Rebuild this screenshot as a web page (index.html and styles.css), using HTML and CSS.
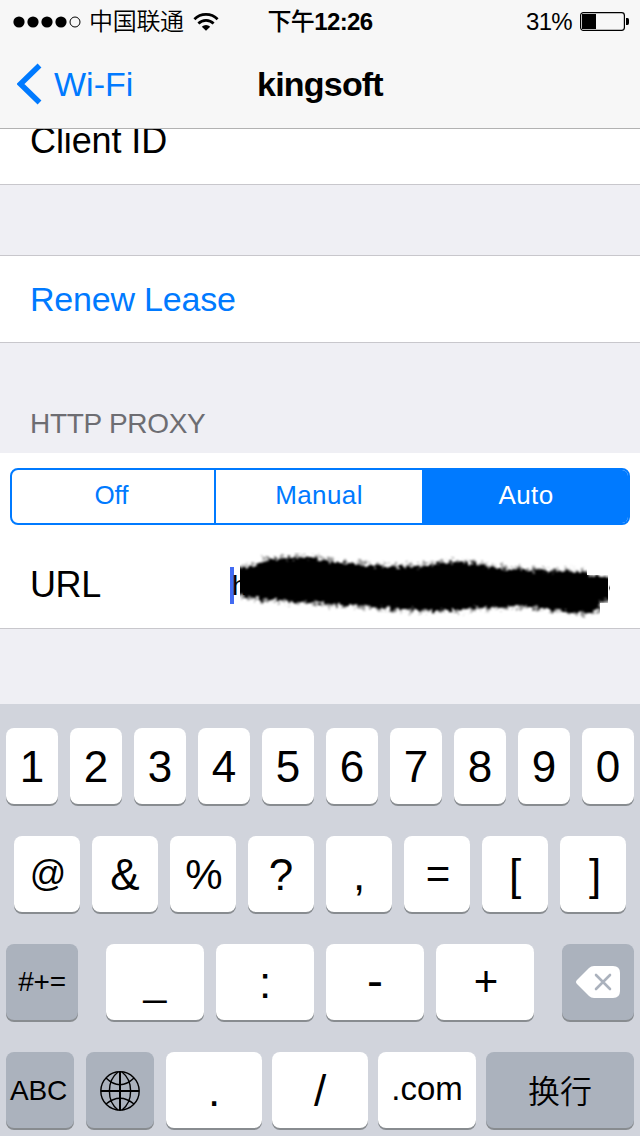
FILE: index.html
```html
<!DOCTYPE html>
<html lang="zh-CN">
<head>
<meta charset="utf-8">
<title>kingsoft</title>
<link rel="stylesheet" href="styles.css">
</head>
<body>
<div class="screen">
  <header class="header">
    <div class="status">
      <div class="status-left">
        <svg class="signal" width="68" height="12" viewBox="0 0 68 12"><circle cx="6" cy="6" r="5.6"/><circle cx="20" cy="6" r="5.6"/><circle cx="34" cy="6" r="5.6"/><circle cx="48" cy="6" r="5.6"/><circle cx="62" cy="6" r="5" fill="none" stroke="#000"/></svg>
        <span class="carrier">中国联通</span>
        <svg class="wifi" width="26" height="20" viewBox="0 0 26 20"><g fill="none" stroke="#000" stroke-width="2.7"><path d="M1.4 7.3a16.3 16.3 0 0 1 23.2 0"/><path d="M5.4 11.5a10.7 10.7 0 0 1 15.2 0"/></g><path d="M13 18.7l-4.2-4a6 6 0 0 1 8.4 0z"/></svg>
      </div>
      <div class="clock"><span class="cjk">下午</span>12:26</div>
      <div class="status-right">
        <span class="percent">31%</span>
        <svg class="battery" width="50" height="20" viewBox="0 0 50 20"><rect x=".6" y=".6" width="43.8" height="17.8" rx="2.8" fill="none" stroke="#000" stroke-width="1.2"/><rect x="2" y="2" width="14" height="15"/><path d="M46 6h1.500q1.500 0 1.500 2v3q0 2-1.500 2H46z"/></svg>
      </div>
    </div>
    <nav class="nav">
      <a class="back"><svg class="chevron" width="26" height="42" viewBox="0 0 26 42"><path d="M22.500 2.500 3.500 21l19 18.500" fill="none" stroke="#007aff" stroke-width="5.500"/></svg><span>Wi-Fi</span></a>
      <h1 class="title">kingsoft</h1>
    </nav>
  </header>

  <main class="settings">
    <div class="row client">Client ID</div>
    <div class="row renew">Renew Lease</div>
    <h2 class="section-title">HTTP PROXY</h2>
    <section class="proxy">
      <div class="segments">
        <span class="segment">Off</span><span class="segment">Manual</span><span class="segment on">Auto</span>
      </div>
      <div class="url-row">
        <span class="url-label">URL</span>
        <div class="field">
          <i class="caret"></i><span class="value">h</span>
          <svg class="scribble" width="372" height="68" viewBox="240 552 372 68">
            <defs>
              <filter id="rough" x="-5%" y="-20%" width="110%" height="140%"><feTurbulence type="fractalNoise" baseFrequency=".22" numOctaves="3" seed="4"/><feDisplacementMap in="SourceGraphic" scale="10" xChannelSelector="R" yChannelSelector="G"/><feGaussianBlur stdDeviation=".8"/></filter>
              <clipPath id="edge"><path d="M240 552h347v23h21v28h-8v17H240z"/></clipPath>
            </defs>
            <g clip-path="url(#edge)"><g filter="url(#rough)">
              <path id="mark" d="M232 568L255 566 262 562 275 559 290 558 310 557 325 560 340 563 360 564 380 566 400 567 425 566 440 563 460 562 475 564 490 567 510 569 540 571 589 572 591 577 614 577V600L599 601 601 608 590 613 570 612 550 609 520 606 490 607 460 610 430 610 400 609 370 607 340 605 310 602 280 600 258 599 240 595 232 594z"/>
              <use href="#mark" fill="none" stroke="#000" stroke-width="6" stroke-opacity=".4" stroke-dasharray="7 3 2 4"/>
            </g></g>
            <path d="M609 585q1.500 3 0 6z"/>
          </svg>
        </div>
      </div>
    </section>
  </main>

  <div class="keyboard">
    <div class="keys digits">
      <b class="key">1</b><b class="key">2</b><b class="key">3</b><b class="key">4</b><b class="key">5</b><b class="key">6</b><b class="key">7</b><b class="key">8</b><b class="key">9</b><b class="key">0</b>
    </div>
    <div class="keys symbols">
      <b class="key at">@</b><b class="key">&amp;</b><b class="key percent-key">%</b><b class="key">?</b><b class="key">,</b><b class="key math">=</b><b class="key">[</b><b class="key bracket">]</b>
    </div>
    <div class="keys third">
      <b class="key dark small">#+=</b><b class="key underscore">_</b><b class="key">:</b><b class="key hyphen">-</b><b class="key math">+</b>
      <b class="key dark"><svg width="44" height="32" viewBox="0 0 44 32"><path d="M18 0h19q7 0 7 7v18q0 7-7 7H18q-3 0-5-2L1 18q-2-2 0-4L13 2q2-2 5-2z" fill="#fff"/><path d="M20 9l14 14M34 9 20 23" stroke="#abb2bd" stroke-width="2.600" stroke-linecap="round"/></svg></b>
    </div>
    <div class="keys fourth">
      <b class="key dark small abc">ABC</b>
      <b class="key dark globe-key"><svg class="globe" width="40" height="40" viewBox="0 0 40 40" fill="none" stroke="#000" stroke-width="1.400"><circle cx="20" cy="20" r="19.200"/><path d="M20 1v38M1 20h38" stroke-width="2"/><path d="M18 1C6.500 10 6.500 30 18 39M22 1C33.500 10 33.500 30 22 39M6 7q14 13.500 28 0M6 33q14-11.500 28 0"/></svg></b>
      <b class="key">.</b><b class="key">/</b><b class="key com">.com</b><b class="key dark enter">换行</b>
    </div>
  </div>
</div>
</body>
</html>
```
FILE: styles.css
```css
* { box-sizing: border-box; }
body { margin: 0; font-family: "Liberation Sans", "Noto Sans CJK SC", sans-serif; color: #000; }
.screen { width: 640px; height: 1136px; overflow: hidden; display: flex; flex-direction: column; background: #efeff4; }

.header { height: 129px; background: #f7f7f7; border-bottom: 1px solid #b2b2b2; }
.status { height: 40px; display: grid; grid-template-columns: 1fr auto 1fr; align-items: center; font-size: 24px; line-height: 40px; }
.status-left { display: flex; align-items: center; padding-left: 13px; }
.signal { margin-top: 2px; }
.carrier { margin: -2px 0 0 8px; width: 96px; font-family: "Noto Sans CJK SC", sans-serif; font-weight: 350; font-size: 24px; letter-spacing: -.3px; white-space: nowrap; }
.wifi { margin: 1px 0 0 8px; }
.clock { font-weight: 700; letter-spacing: -.6px; white-space: nowrap; }
.cjk { font-family: "Noto Sans CJK SC", sans-serif; font-weight: 500; }
.status-right { display: flex; justify-content: flex-end; align-items: center; padding-right: 10px; }
.percent { letter-spacing: -.7px; margin: 2px 8px 0 0; }
.battery { margin-top: 2px; }
.nav { height: 88px; display: grid; grid-template-columns: 1fr auto 1fr; align-items: center; font-size: 34px; line-height: 88px; }
.back { display: flex; align-items: center; padding-left: 17px; color: #007aff; }
.back span { margin-left: 11px; }
.title { margin: 0; font-size: 34px; font-weight: 700; letter-spacing: -.8px; }

.settings { height: 575px; }
.row { background: #fff; padding-left: 30px; border-bottom: 1px solid #c8c7cc; }
.client { height: 56px; overflow: hidden; font-size: 36px; line-height: 24px; letter-spacing: -.1px; }
.renew { margin-top: 70px; height: 88px; border-top: 1px solid #c8c7cc; font-size: 34px; line-height: 87px; color: #007aff; letter-spacing: -.2px; }
.section-title { margin: 0; height: 110px; padding: 60px 0 0 30px; font-size: 28px; font-weight: 400; line-height: 41px; letter-spacing: -.3px; color: #6d6d72; }
.proxy { height: 176px; padding: 15px 10px 0; background: #fff; border-bottom: 1px solid #c8c7cc; }
.segments { display: grid; grid-template-columns: 202px 208px 1fr; height: 57px; border: 2px solid #007aff; border-radius: 8px; overflow: hidden; font-size: 26px; line-height: 51px; letter-spacing: .4px; text-align: center; color: #007aff; }
.segment:first-child { padding-right: 3px; letter-spacing: 0; }
.segment + .segment { border-left: 2px solid #007aff; }
.segment.on { background: #007aff; color: #fff; }
.url-row { display: flex; height: 103px; padding-left: 20px; }
.url-label { width: 200px; font-size: 36px; line-height: 119px; letter-spacing: -.4px; }
.field { display: flex; padding-top: 42px; }
.caret { width: 4px; height: 37px; background: #426bf2; }
.value { width: 6px; font-size: 28px; line-height: 37px; text-indent: -2px; }
.scribble { margin-top: -15px; position: relative; }

.keyboard { flex: 1; padding: 24px 6px 0; background: #d1d4dc; display: flex; flex-direction: column; gap: 32px; }
.keys { display: grid; height: 76px; gap: 12px; flex: none; }
.digits { grid-template-columns: repeat(10, 52px); }
.symbols { grid-template-columns: repeat(8, 66px); padding-left: 8px; }
.third { grid-template-columns: 88px repeat(4, 98px) 88px; }
.third .key:first-child { width: 72px; }
.third .key:last-child { width: 72px; justify-self: end; }
.fourth { grid-template-columns: 70px 70px 96px 96px 98px 148px; column-gap: 10px; }
.fourth .abc, .globe-key { width: 68px; }
.key { display: flex; align-items: center; justify-content: center; height: 76px; border-radius: 8px; background: #fff; box-shadow: 0 2px #888c90; font-size: 44px; line-height: 76px; font-weight: 400; padding-top: 1px; }
.dark { background: #abb2bd; padding: 0; }
.globe-key { padding-top: 2px; }
.small { font-size: 28px; letter-spacing: -.2px; }
.abc { padding-right: 3px; padding-top: 2px; }
.at { font-size: 36px; padding: 0 0 1px 2px; }
.percent-key { font-size: 42px; padding-left: 2px; }
.math { font-size: 42px; padding: 0 0 0 2px; }
.bracket { padding-left: 4px; }
.underscore { font-size: 41px; padding: 0 0 3px; }
.hyphen { font-size: 48px; padding: 0 0 3px; }
.com { font-size: 33px; padding-bottom: 4px; }
.enter { font-family: "Noto Sans CJK SC", sans-serif; font-size: 32px; font-weight: 350; padding-bottom: 3px; }
```
